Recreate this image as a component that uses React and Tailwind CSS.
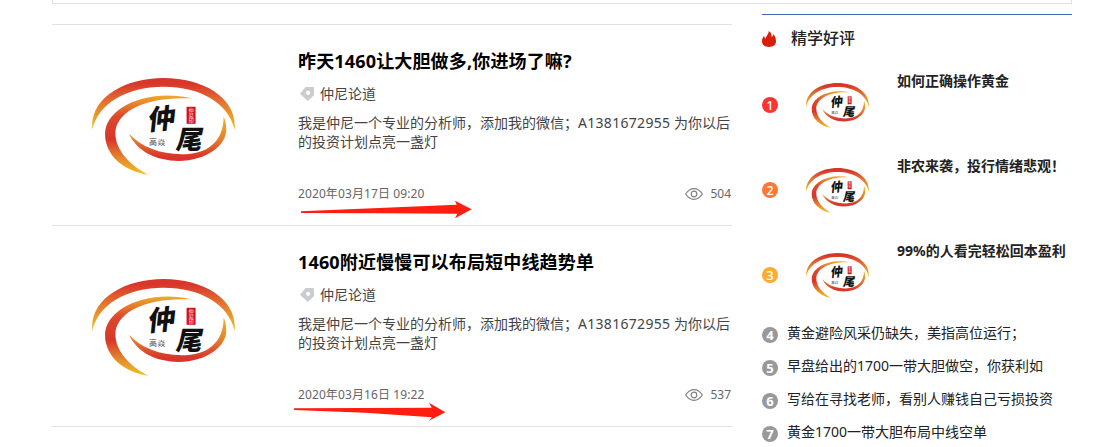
import { useId } from "react";

const articles = [
  {
    id: 1,
    title: "昨天1460让大胆做多,你进场了嘛?",
    date: "2020年03月17日 09:20",
    views: 504,
    arrowTop: "top-[145px]",
    arrow: "48,124 515,104 510,92 560,118 510,145 517,131 290,130 48,129",
  },
  {
    id: 2,
    title: "1460附近慢慢可以布局短中线趋势单",
    date: "2020年03月16日 19:22",
    views: 537,
    arrowTop: "top-[144px]",
    arrow: "27,115 440,113 432,98 481,127 432,152 441,142 240,128 27,120",
  },
];

const featured = [
  { rank: 1, title: "如何正确操作黄金", color: "bg-[#ff3333]" },
  { rank: 2, title: "非农来袭，投行情绪悲观！", color: "bg-[#ff7733]" },
  { rank: 3, title: "99%的人看完轻松回本盈利", color: "bg-[#ffaa33]" },
];

const others = [
  { rank: 4, title: "黄金避险风采仍缺失，美指高位运行；" },
  { rank: 5, title: "早盘给出的1700一带大胆做空，你获利如" },
  { rank: 6, title: "写给在寻找老师，看别人赚钱自己亏损投资" },
  { rank: 7, title: "黄金1700一带大胆布局中线空单" },
];

function Logo({ className }) {
  const id = useId();
  return (
    <svg viewBox="36 40 428 290" preserveAspectRatio="none" className={className}>
      <defs>
        <linearGradient id={`${id}a`} x1="0" y1="0" x2="0" y2="1">
          <stop offset="0.1" stopColor="#d9352b" />
          <stop offset="0.5" stopColor="#e4782f" />
          <stop offset="1" stopColor="#f2c11f" />
        </linearGradient>
        <linearGradient id={`${id}b`} x1="0" y1="0" x2="0" y2="1">
          <stop offset="0" stopColor="#efab2a" />
          <stop offset="0.25" stopColor="#dc4a2c" />
          <stop offset="0.55" stopColor="#d9352b" />
          <stop offset="0.8" stopColor="#e58a2d" />
          <stop offset="1" stopColor="#f2c11f" />
        </linearGradient>
        <linearGradient id={`${id}c`} x1="0" y1="0" x2="0" y2="1">
          <stop offset="0" stopColor="#f0b428" />
          <stop offset="0.5" stopColor="#e4812d" />
          <stop offset="0.9" stopColor="#d9352b" />
        </linearGradient>
      </defs>
      <path fill={`url(#${id}a)`} d="M37 195C28 102 130 40 250 40C375 40 472 104 463 195C445 115 360 66 250 66C140 66 54 116 37 195Z" />
      <path fill={`url(#${id}b)`} d="M335 101C200 70 75 130 75 208C75 270 130 318 205 329C150 302 106 255 106 205C106 144 190 94 335 101Z" />
      <path fill={`url(#${id}c)`} d="M147 207C170 260 230 288 295 288C380 288 438 240 438 195C438 180 435 165 430 155C430 232 380 268 305 268C240 268 182 246 147 207Z" />
      <g fontFamily="'Noto Sans CJK SC', sans-serif" fontWeight="900" fill="#111">
        <text x="0" y="0" fontSize="82" transform="translate(202 196) rotate(-6) skewX(-12)">仲</text>
        <text x="0" y="0" fontSize="78" transform="translate(285 252) skewX(-12)">尾</text>
        <text x="207" y="241" fontSize="24" fontWeight="400" fill="#444">高焱</text>
      </g>
      <rect x="319" y="126" width="27" height="51" fill="#d5121c" />
      <text
        x="333"
        y="128"
        fontFamily="'Noto Sans CJK SC', sans-serif"
        fontSize="15"
        fill="#fff"
        style={{ writingMode: "vertical-rl" }}
      >
        仲尼印
      </text>
    </svg>
  );
}

function TagIcon() {
  return (
    <svg viewBox="0 0 14 14" className="w-3.5 h-3.5">
      <path fill="#c9cdd0" fillRule="evenodd" d="M5.6 0H13a1 1 0 0 1 1 1v7.2L7.8 14 0 6.8ZM8.2 3.7a2.1 2.1 0 1 0 0 4.2a2.1 2.1 0 1 0 0-4.2Z" />
    </svg>
  );
}

function EyeIcon() {
  return (
    <svg viewBox="0 0 18 12" className="w-[18px] h-3" fill="none" stroke="#808080" strokeWidth="1.2">
      <path d="M.7 6C3 2.500 5.800.7 9 .7S15 2.500 17.300 6C15 9.500 12.200 11.300 9 11.300S3 9.500.7 6Z" />
      <circle cx="9" cy="6" r="2.800" />
    </svg>
  );
}

function FlameIcon() {
  return (
    <svg viewBox="0 0 14 16" className="w-3.5 h-4">
      <path fill="#d81e06" d="M6.700 0C9.300 1.400 9.900 3.700 9.600 6.200C10.500 5.700 11.100 4.600 11.300 2.900C13.200 5.200 14 7.800 14 10.300C14 14 10.800 16 7 16S0 14 0 10.300C0 8 .8 6.200 2.100 4.700C2.200 6 2.500 6.900 3.600 7.500C4 4.800 6.800 3.600 6.700 0Z" />
    </svg>
  );
}

function Article({ item }) {
  return (
    <article className="relative flex h-[201px] border-t border-[#e2e2e2]">
      <div className="w-[246px] shrink-0 pl-10 pt-[53px]">
        <Logo className="w-[143px] h-[97px]" />
      </div>
      <div className="flex-1 pt-[22px]">
        <h2 className="text-lg leading-7 font-bold text-black tracking-[0.16px] whitespace-nowrap">{item.title}</h2>
        <div className="mt-[9px] flex items-center gap-1.5 pl-0.5 text-sm leading-5 text-[#444]">
          <TagIcon />
          <span>仲尼论道</span>
        </div>
        <p className="mt-[9px] text-sm leading-[19px] text-[#444] whitespace-nowrap">
          我是仲尼一个专业的分析师，添加我的微信；<span className="tracking-[0.3px]">A1381672955</span> 为你以后
          <br />
          的投资计划点亮一盏灯
        </p>
        <div className="mt-[33px] flex items-center text-xs leading-5 text-[#666]">
          <span className="tracking-[0.1px]">{item.date}</span>
          <span className="ml-auto mr-[7px]"><EyeIcon /></span>
          <span className="pr-px">{item.views}</span>
        </div>
      </div>
      <svg viewBox="0 0 600 210" className={`absolute left-[233px] w-[200px] h-[70px] ${item.arrowTop}`}>
        <polygon points={item.arrow} fill="#ff1e10" />
      </svg>
    </article>
  );
}

function Sidebar() {
  return (
    <aside className="mt-[10px] w-[310px] border-t border-[#4468b0] text-[#222]">
      <div className="flex h-[47px] items-center gap-[15px]">
        <FlameIcon />
        <h3 className="pb-0.5 text-base font-medium">精学好评</h3>
      </div>
      {featured.map((item) => (
        <div key={item.rank} className="flex h-[85px] items-center">
          <span className={`flex size-4 items-center justify-center rounded-full text-[13px] leading-4 font-medium text-white ${item.color}`}>
            {item.rank}
          </span>
          <Logo className="ml-7 mt-0.5 w-[63px] h-[45px]" />
          <p className="ml-7 mt-[9px] self-start text-sm leading-5 font-bold whitespace-nowrap">{item.title}</p>
        </div>
      ))}
      <ul className="pt-px">
        {others.map((item) => (
          <li key={item.rank} className="flex h-[33px] items-center gap-[9px]">
            <span className="flex size-4 items-center justify-center rounded-full bg-[#999] text-[13px] leading-4 font-bold text-white">
              {item.rank}
            </span>
            <span className="pb-1 text-sm leading-5 whitespace-nowrap">{item.title}</span>
          </li>
        ))}
      </ul>
    </aside>
  );
}

export default function App() {
  return (
    <div className="h-[447px] overflow-hidden bg-white pl-[52px] font-['Noto_Sans','Noto_Sans_CJK_SC',sans-serif]">
      <div className="h-1 w-[1020px] border-x border-b border-[#e2e2e2]" />
      <div className="flex w-[1020px] justify-between">
        <main className="mt-5 w-[680px]">
          {articles.map((item) => (
            <Article key={item.id} item={item} />
          ))}
          <div className="border-t border-[#e2e2e2]" />
        </main>
        <Sidebar />
      </div>
    </div>
  );
}
